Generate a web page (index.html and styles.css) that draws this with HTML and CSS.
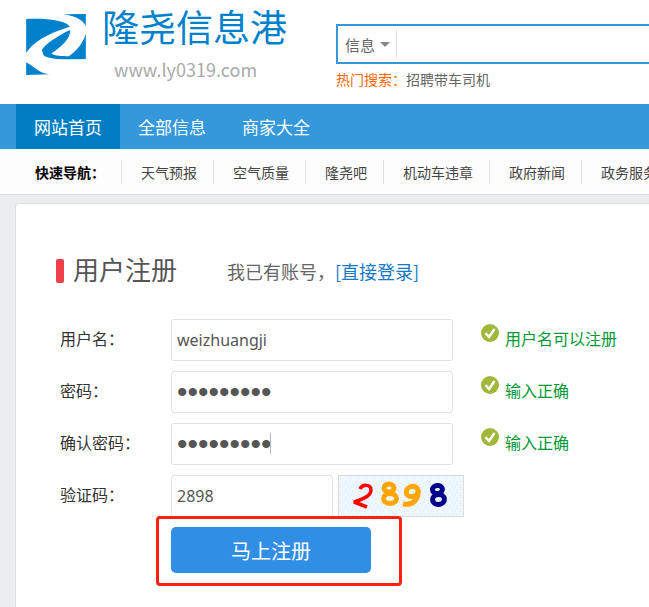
FILE: index.html
```html
<!DOCTYPE html>
<html lang="zh-CN">
<head>
<meta charset="utf-8">
<title>用户注册 - 隆尧信息港</title>
<link rel="stylesheet" href="styles.css">
</head>
<body>
<header class="header">
  <a class="logo" href="#">
    <svg class="logo-mark" viewBox="78 42 178 182" aria-hidden="true">
      <path d="M78 57C125 53 200 60 208 80C190 86 164 94 136 109C108 123 90 140 78 158Z"/>
      <path d="M190 43L256 42V78C247 60 224 48 190 43Z"/>
      <path d="M125 151C128 137 168 110 208 90C213 113 186 138 153 160C163 167 184 168 205 168C230 152 250 124 256 100V176C204 178 148 180 130 165Z"/>
      <path d="M78 187C96 192 112 219 147 222L78 224Z"/>
    </svg>
    <span class="logo-text">
      <span class="logo-name">隆尧信息港</span>
      <span class="logo-url">www.ly0319.com</span>
    </span>
  </a>
  <div class="search">
    <form class="search-box">
      <button class="search-type" type="button">信息<span class="arrow"></span></button>
      <input class="search-input" type="text" aria-label="搜索">
    </form>
    <p class="hot"><span class="hot-label">热门搜索：</span><a href="#">招聘带车司机</a></p>
  </div>
</header>
<nav class="nav">
  <a class="active" href="#">网站首页</a>
  <a href="#">全部信息</a>
  <a href="#">商家大全</a>
</nav>
<nav class="quick">
  <strong>快速导航：</strong>
  <a href="#">天气预报</a>
  <a href="#">空气质量</a>
  <a href="#">隆尧吧</a>
  <a href="#">机动车违章</a>
  <a href="#">政府新闻</a>
  <a href="#">政务服务</a>
</nav>
<main class="card">
  <div class="title">
    <h1>用户注册</h1>
    <p>我已有账号，<a href="#">[直接登录]</a></p>
  </div>
  <form class="form">
    <div class="row">
      <label for="user">用户名：</label>
      <input class="field" id="user" type="text" value="weizhuangji">
      <p class="ok"><svg viewBox="0 0 18 18" aria-hidden="true"><circle cx="9" cy="9" r="9"/><path d="M4.5 9.2L8 13L13.5 5"/></svg>用户名可以注册</p>
    </div>
    <div class="row">
      <label for="pass">密码：</label>
      <input class="field secret" id="pass" type="password" value="123456789">
      <p class="ok"><svg viewBox="0 0 18 18" aria-hidden="true"><circle cx="9" cy="9" r="9"/><path d="M4.5 9.2L8 13L13.5 5"/></svg>输入正确</p>
    </div>
    <div class="row">
      <label for="pass2">确认密码：</label>
      <div class="field-wrap">
        <input class="field secret" id="pass2" type="password" value="123456789">
        <span class="caret"></span>
      </div>
      <p class="ok"><svg viewBox="0 0 18 18" aria-hidden="true"><circle cx="9" cy="9" r="9"/><path d="M4.5 9.2L8 13L13.5 5"/></svg>输入正确</p>
    </div>
    <div class="row">
      <label for="code">验证码：</label>
      <input class="field short" id="code" type="text" value="2898">
      <svg class="captcha" viewBox="0 0 126 42" role="img" aria-label="2898">
        <defs>
          <pattern id="noise" width="8" height="8" patternUnits="userSpaceOnUse">
            <rect width="8" height="8" fill="#f0f8ff"/>
            <path d="M1 1h1v1h-1zM5 3h1v1h-1zM3 6h1v1h-1z" fill="#d5e9fb"/>
            <path d="M6 0h1v1h-1zM2 4h1v1h-1z" fill="#e6dffa"/>
            <path d="M7 6h1v1h-1zM4 1h1v1h-1z" fill="#d9f7f5"/>
          </pattern>
        </defs>
        <rect x="0.5" y="0.5" width="125" height="41" fill="url(#noise)" stroke="#dcdcdc"/>
        <g fill="none" stroke-width="5">
          <path d="M22 14C24 9 33 9 33 15C33 21 25 24 16 27L29 32" stroke="#f00" stroke-width="3.5" stroke-linejoin="bevel"/>
          <g stroke="#ffa500">
            <ellipse cx="51" cy="13" rx="5" ry="4"/><ellipse cx="52" cy="23.500" rx="6.500" ry="5"/>
            <ellipse cx="74" cy="16.500" rx="6" ry="5" transform="rotate(-20 74 16)"/>
            <path d="M80 15C81 23 76 31 65 29"/>
          </g>
          <g stroke="#00008b" transform="rotate(-6 100 20)">
            <ellipse cx="100" cy="14.500" rx="5" ry="4"/><ellipse cx="100" cy="24.500" rx="6" ry="5"/>
          </g>
        </g>
      </svg>
    </div>
    <div class="submit">
      <button type="submit">马上注册</button>
      <span class="highlight"></span>
    </div>
  </form>
</main>
</body>
</html>
```
FILE: styles.css
```css
* { box-sizing: border-box; }
html { height: 100%; overflow: hidden; }
body {
  display: flex;
  flex-direction: column;
  min-height: 100%;
  margin: 0;
  overflow: hidden;
  background: #ecedef;
  color: #333;
  font: 14px/20px "Noto Sans CJK SC", sans-serif;
}
p, h1 { margin: 0; font-weight: normal; }
a { color: inherit; text-decoration: none; }
input, button { margin: 0; font-family: inherit; }

.header {
  display: flex;
  gap: 48px;
  height: 104px;
  padding-left: 26px;
  background: #fff;
}
.logo { display: flex; flex: none; gap: 16px; }
.logo-mark { width: 60px; height: 61px; margin-top: 14px; fill: #0081cc; }
.logo-text { display: flex; flex-direction: column; width: 186px; }
.logo-name { margin-top: 3px; color: #0081cc; font-size: 37px; line-height: 46px; white-space: nowrap; }
.logo-url { padding-left: 12px; color: #aaa; font-size: 18px; line-height: 40px; }

.search { flex: 1; padding-top: 24px; }
.search-box {
  display: flex;
  align-items: center;
  height: 40px;
  border: 2px solid #3498db;
  border-right: 0;
}
.search-type {
  display: flex;
  align-items: center;
  gap: 5px;
  height: 28px;
  padding: 0 6px 0 7px;
  border: 0;
  border-right: 1px solid #ddd;
  background: none;
  color: #666;
  font-size: 15px;
}
.arrow { border: 5px solid transparent; border-top-color: #888; border-bottom: 0; }
.search-input { flex: 1; min-width: 0; border: 0; outline: 0; }
.hot { padding-top: 5px; color: #666; }
.hot-label { color: #f60; }

.nav {
  display: flex;
  height: 45px;
  padding-left: 16px;
  background: #3498db;
  color: #fff;
  font-size: 17px;
  line-height: 45px;
}
.nav a { padding: 0 18px; }
.nav .active { background: #007dc3; }

.quick {
  display: flex;
  align-items: center;
  height: 46px;
  padding-left: 35px;
  border-bottom: 1px solid #ddd;
  background: #fdfdfd;
  color: #444;
  white-space: nowrap;
}
.quick strong { flex: none; width: 86px; color: #000; }
.quick a { flex: none; padding: 2px 16px 2px 19px; border-left: 1px solid #ddd; }

.card {
  flex: 1;
  margin: 8px 0 0 15px;
  padding: 46px 0 20px 40px;
  border: 1px solid #dedfe1;
  border-width: 1px 0 0 1px;
  border-radius: 4px 0 0 0;
  background: #fff;
}
.title { display: flex; align-items: center; height: 42px; margin-bottom: 27px; }
.title::before {
  width: 8px;
  height: 24px;
  margin-right: 9px;
  border-radius: 2px;
  background: #ee4149;
  content: "";
}
.title h1 { padding-bottom: 4px; color: #555; font-size: 26px; line-height: 38px; }
.title p { margin-left: 50px; color: #666; font-size: 18px; line-height: 24px; }
.title p a { color: #1878c8; }

.form { display: flex; flex-direction: column; gap: 10px; padding-left: 4px; font-size: 16px; }
.row { display: flex; align-items: center; height: 42px; }
.row label { width: 111px; padding-bottom: 4px; }
.field {
  width: 282px;
  height: 42px;
  padding: 0 5px;
  border: 1px solid #e2e2e2;
  border-radius: 3px;
  background: #fff;
  color: #555;
  font: 16px "Noto Sans", "Noto Sans CJK SC", sans-serif;
  outline: 0;
}
.secret { font: 30px "Liberation Sans", sans-serif; }
.short { width: 162px; }
.field-wrap { position: relative; }
.caret { position: absolute; left: 99px; top: 10px; width: 1px; height: 21px; background: #bbb; }
.ok { display: flex; gap: 6px; margin-left: 28px; padding-bottom: 4px; color: #009933; white-space: nowrap; }
.ok svg { width: 18px; height: 18px; margin-top: -4px; fill: #a0b83a; }
.ok path { fill: none; stroke: #fff; stroke-width: 2.5; }
.captcha { width: 126px; height: 42px; margin-left: 5px; }

.submit { position: relative; width: 200px; margin-left: 111px; }
.submit button {
  display: block;
  width: 100%;
  height: 46px;
  border: 0;
  border-radius: 5px;
  background: #318ee5;
  color: #fff;
  font-size: 20px;
}
.highlight {
  position: absolute;
  inset: -11px -31px -13px -15px;
  border: 3px solid #ff2013;
  border-radius: 4px;
  pointer-events: none;
}
```
